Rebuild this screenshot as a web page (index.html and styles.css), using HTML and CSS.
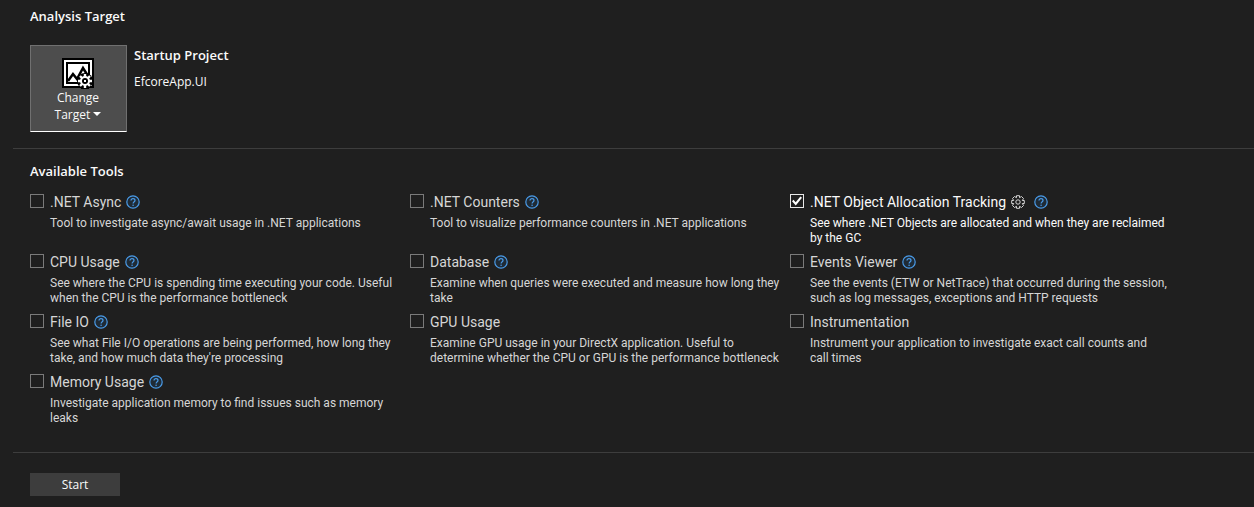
FILE: index.html
```html
<!DOCTYPE html>
<html lang="en">
<head>
<meta charset="utf-8">
<meta name="viewport" content="width=device-width, initial-scale=1">
<title>Analysis Target</title>
<link rel="stylesheet" href="styles.css">
</head>
<body>
<svg class="symbols" aria-hidden="true">
  <symbol id="help" viewBox="0 0 14 14">
    <circle cx="7" cy="7" r="6.2" fill="#1f2b36" stroke="#4a9be8" stroke-width="1.2"/>
    <path d="M5 5.600C5 4.300 5.900 3.600 7 3.600s2 .7 2 1.800C9 6.700 7.100 6.800 7.100 8.600" fill="none" stroke="#4a9be8" stroke-width="1.200"/>
    <circle cx="7.100" cy="10.300" r=".8" fill="#4a9be8"/>
  </symbol>
</svg>
<main>
  <section class="panel target">
    <h2>Analysis Target</h2>
    <div class="target-row">
      <button class="change" type="button">
        <svg class="change-icon" viewBox="0 0 32 31" aria-hidden="true">
          <path d="M0 0h32v30h-5v1h-8v-1H0z" fill="#000"/>
          <path d="M2 2h28v26H2z" fill="#fff"/>
          <path d="M4 4h24v22H4z" fill="#000"/>
          <path d="M6 6h20v18H6z" fill="#fff"/>
          <path d="M6 23l5-7 4 5 6-11 5 8" fill="none" stroke="#000" stroke-width="2.500"/>
          <circle cx="23" cy="23" r="8" fill="#000"/>
          <path d="M23 16v14M16 23h14M18 18l10 10M28 18L18 28" stroke="#fff" stroke-width="2.400"/>
          <circle cx="23" cy="23" r="5" fill="#fff"/>
          <circle cx="23" cy="23" r="3" fill="#000"/>
          <path d="M22 22h2v2h-2z" fill="#fff"/>
        </svg>
        <span>Change<br>Target <svg class="caret" viewBox="0 0 8 4" aria-hidden="true"><path d="M0 0h8L4 4z" fill="#fff"/></svg></span>
      </button>
      <div class="project">
        <h3>Startup Project</h3>
        <p>EfcoreApp.UI</p>
      </div>
    </div>
  </section>

  <section class="panel tools">
    <h2>Available Tools</h2>
    <div class="grid">
      <div class="tool">
        <input type="checkbox" id="t1"><div class="name"><label for="t1">.NET Async</label><svg class="help" role="img" aria-label="Help"><use href="#help"/></svg></div>
        <p>Tool to investigate async/await usage in .NET applications</p>
      </div>
      <div class="tool">
        <input type="checkbox" id="t2"><div class="name"><label for="t2">.NET Counters</label><svg class="help" role="img" aria-label="Help"><use href="#help"/></svg></div>
        <p>Tool to visualize performance counters in .NET applications</p>
      </div>
      <div class="tool selected">
        <input type="checkbox" id="t3" checked><div class="name"><label for="t3">.NET Object Allocation Tracking</label><svg class="gear" viewBox="0 0 14 14" role="img" aria-label="Settings"><path d="M5.500.7h3v2l2-1.200 2 2-1.200 2h2v3h-2l1.200 2-2 2-2-1.200v2h-3v-2l-2 1.200-2-2 1.200-2h-2v-3h2l-1.200-2 2-2 2 1.200z"/><circle cx="7" cy="7" r="2.200"/></svg><svg class="help" role="img" aria-label="Help"><use href="#help"/></svg></div>
        <p>See where .NET Objects are allocated and when they are reclaimed<br>by the GC</p>
      </div>
      <div class="tool">
        <input type="checkbox" id="t4"><div class="name"><label for="t4">CPU Usage</label><svg class="help" role="img" aria-label="Help"><use href="#help"/></svg></div>
        <p>See where the CPU is spending time executing your code. Useful when the CPU is the performance bottleneck</p>
      </div>
      <div class="tool">
        <input type="checkbox" id="t5"><div class="name"><label for="t5">Database</label><svg class="help" role="img" aria-label="Help"><use href="#help"/></svg></div>
        <p>Examine when queries were executed and measure how long they take</p>
      </div>
      <div class="tool">
        <input type="checkbox" id="t6"><div class="name"><label for="t6">Events Viewer</label><svg class="help" role="img" aria-label="Help"><use href="#help"/></svg></div>
        <p>See the events (ETW or NetTrace) that occurred during the session,<br>such as log messages, exceptions and HTTP requests</p>
      </div>
      <div class="tool">
        <input type="checkbox" id="t7"><div class="name"><label for="t7">File IO</label><svg class="help" role="img" aria-label="Help"><use href="#help"/></svg></div>
        <p>See what File I/O operations are being performed, how long they take, and how much data they're processing</p>
      </div>
      <div class="tool">
        <input type="checkbox" id="t8"><div class="name"><label for="t8">GPU Usage</label></div>
        <p>Examine GPU usage in your DirectX application. Useful to determine whether the CPU or GPU is the performance bottleneck</p>
      </div>
      <div class="tool">
        <input type="checkbox" id="t9"><div class="name"><label for="t9">Instrumentation</label></div>
        <p>Instrument your application to investigate exact call counts and<br>call times</p>
      </div>
      <div class="tool">
        <input type="checkbox" id="t10"><div class="name"><label for="t10">Memory Usage</label><svg class="help" role="img" aria-label="Help"><use href="#help"/></svg></div>
        <p>Investigate application memory to find issues such as memory leaks</p>
      </div>
    </div>
  </section>

  <section class="panel actions">
    <button class="start" type="button">Start</button>
  </section>
</main>
</body>
</html>
```
FILE: styles.css
```css
* { box-sizing: border-box; }
body {
  margin: 0;
  background: #1f1f1f;
  color: #fafafa;
  font: 12px/15px "Segoe UI", "Open Sans", "Noto Sans", sans-serif;
}
h2, h3, p { margin: 0; }
h2, h3 { font-size: 13px; line-height: 20px; font-weight: 600; }
.symbols { display: none; }
main { padding-left: 13px; }
.panel { padding-left: 17px; }
.panel + .panel { border-top: 1px solid #3d3d3d; }

.target { padding-top: 6px; padding-bottom: 16px; }
.target-row { display: flex; gap: 7px; margin-top: 19px; }
.project p { margin-top: 9px; }
.change {
  display: flex;
  flex-direction: column;
  align-items: center;
  width: 97px;
  padding: 12px 9px 8px 8px;
  border: 1px solid #707070;
  border-bottom-color: #fff;
  background: #4d4d4d;
  color: #fafafa;
  font: inherit;
  line-height: 17px;
}
.change-icon { width: 32px; height: 31px; }
.caret { width: 8px; height: 4px; vertical-align: 3px; }

.tools { padding-top: 12px; padding-bottom: 20px; }
.grid {
  display: grid;
  grid-template-columns: repeat(2, minmax(0, 380px)) minmax(0, 400px);
  grid-auto-rows: minmax(60px, auto);
  margin-top: 11px;
  font-family: "Segoe UI", Roboto, "Open Sans", sans-serif;
}
.tool {
  display: grid;
  grid-template-columns: 14px minmax(0, 1fr);
  grid-template-rows: 20px auto;
  column-gap: 6px;
  align-content: start;
  padding-right: 4px;
  color: #d6d6d6;
}
.tool.selected { color: #fafafa; }
.tool p { grid-column: 2; padding-top: 4px; }
.name {
  display: flex;
  align-items: center;
  gap: 5px;
  font-size: 14px;
  line-height: 20px;
}
.tool input {
  appearance: none;
  display: grid;
  place-items: center;
  width: 14px;
  height: 14px;
  margin: 2px 0 0;
  border: 1px solid #7a7a7a;
}
.tool input:checked { border-color: #e8e8e8; }
.tool input:checked::before {
  content: "";
  width: 10px;
  height: 10px;
  background: #fff;
  clip-path: polygon(0 52%, 15% 38%, 37% 62%, 84% 4%, 100% 18%, 38% 95%);
}
.help { width: 14px; height: 14px; flex: none; }
.gear {
  width: 14px;
  height: 14px;
  margin-right: 4px;
  fill: none;
  stroke: #d6d6d6;
  stroke-width: 1;
}

.actions { padding-top: 20px; padding-bottom: 11px; }
.start {
  width: 90px;
  height: 23px;
  padding: 0;
  border: 0;
  background: #3d3d3d;
  color: #fafafa;
  font: inherit;
}
```
